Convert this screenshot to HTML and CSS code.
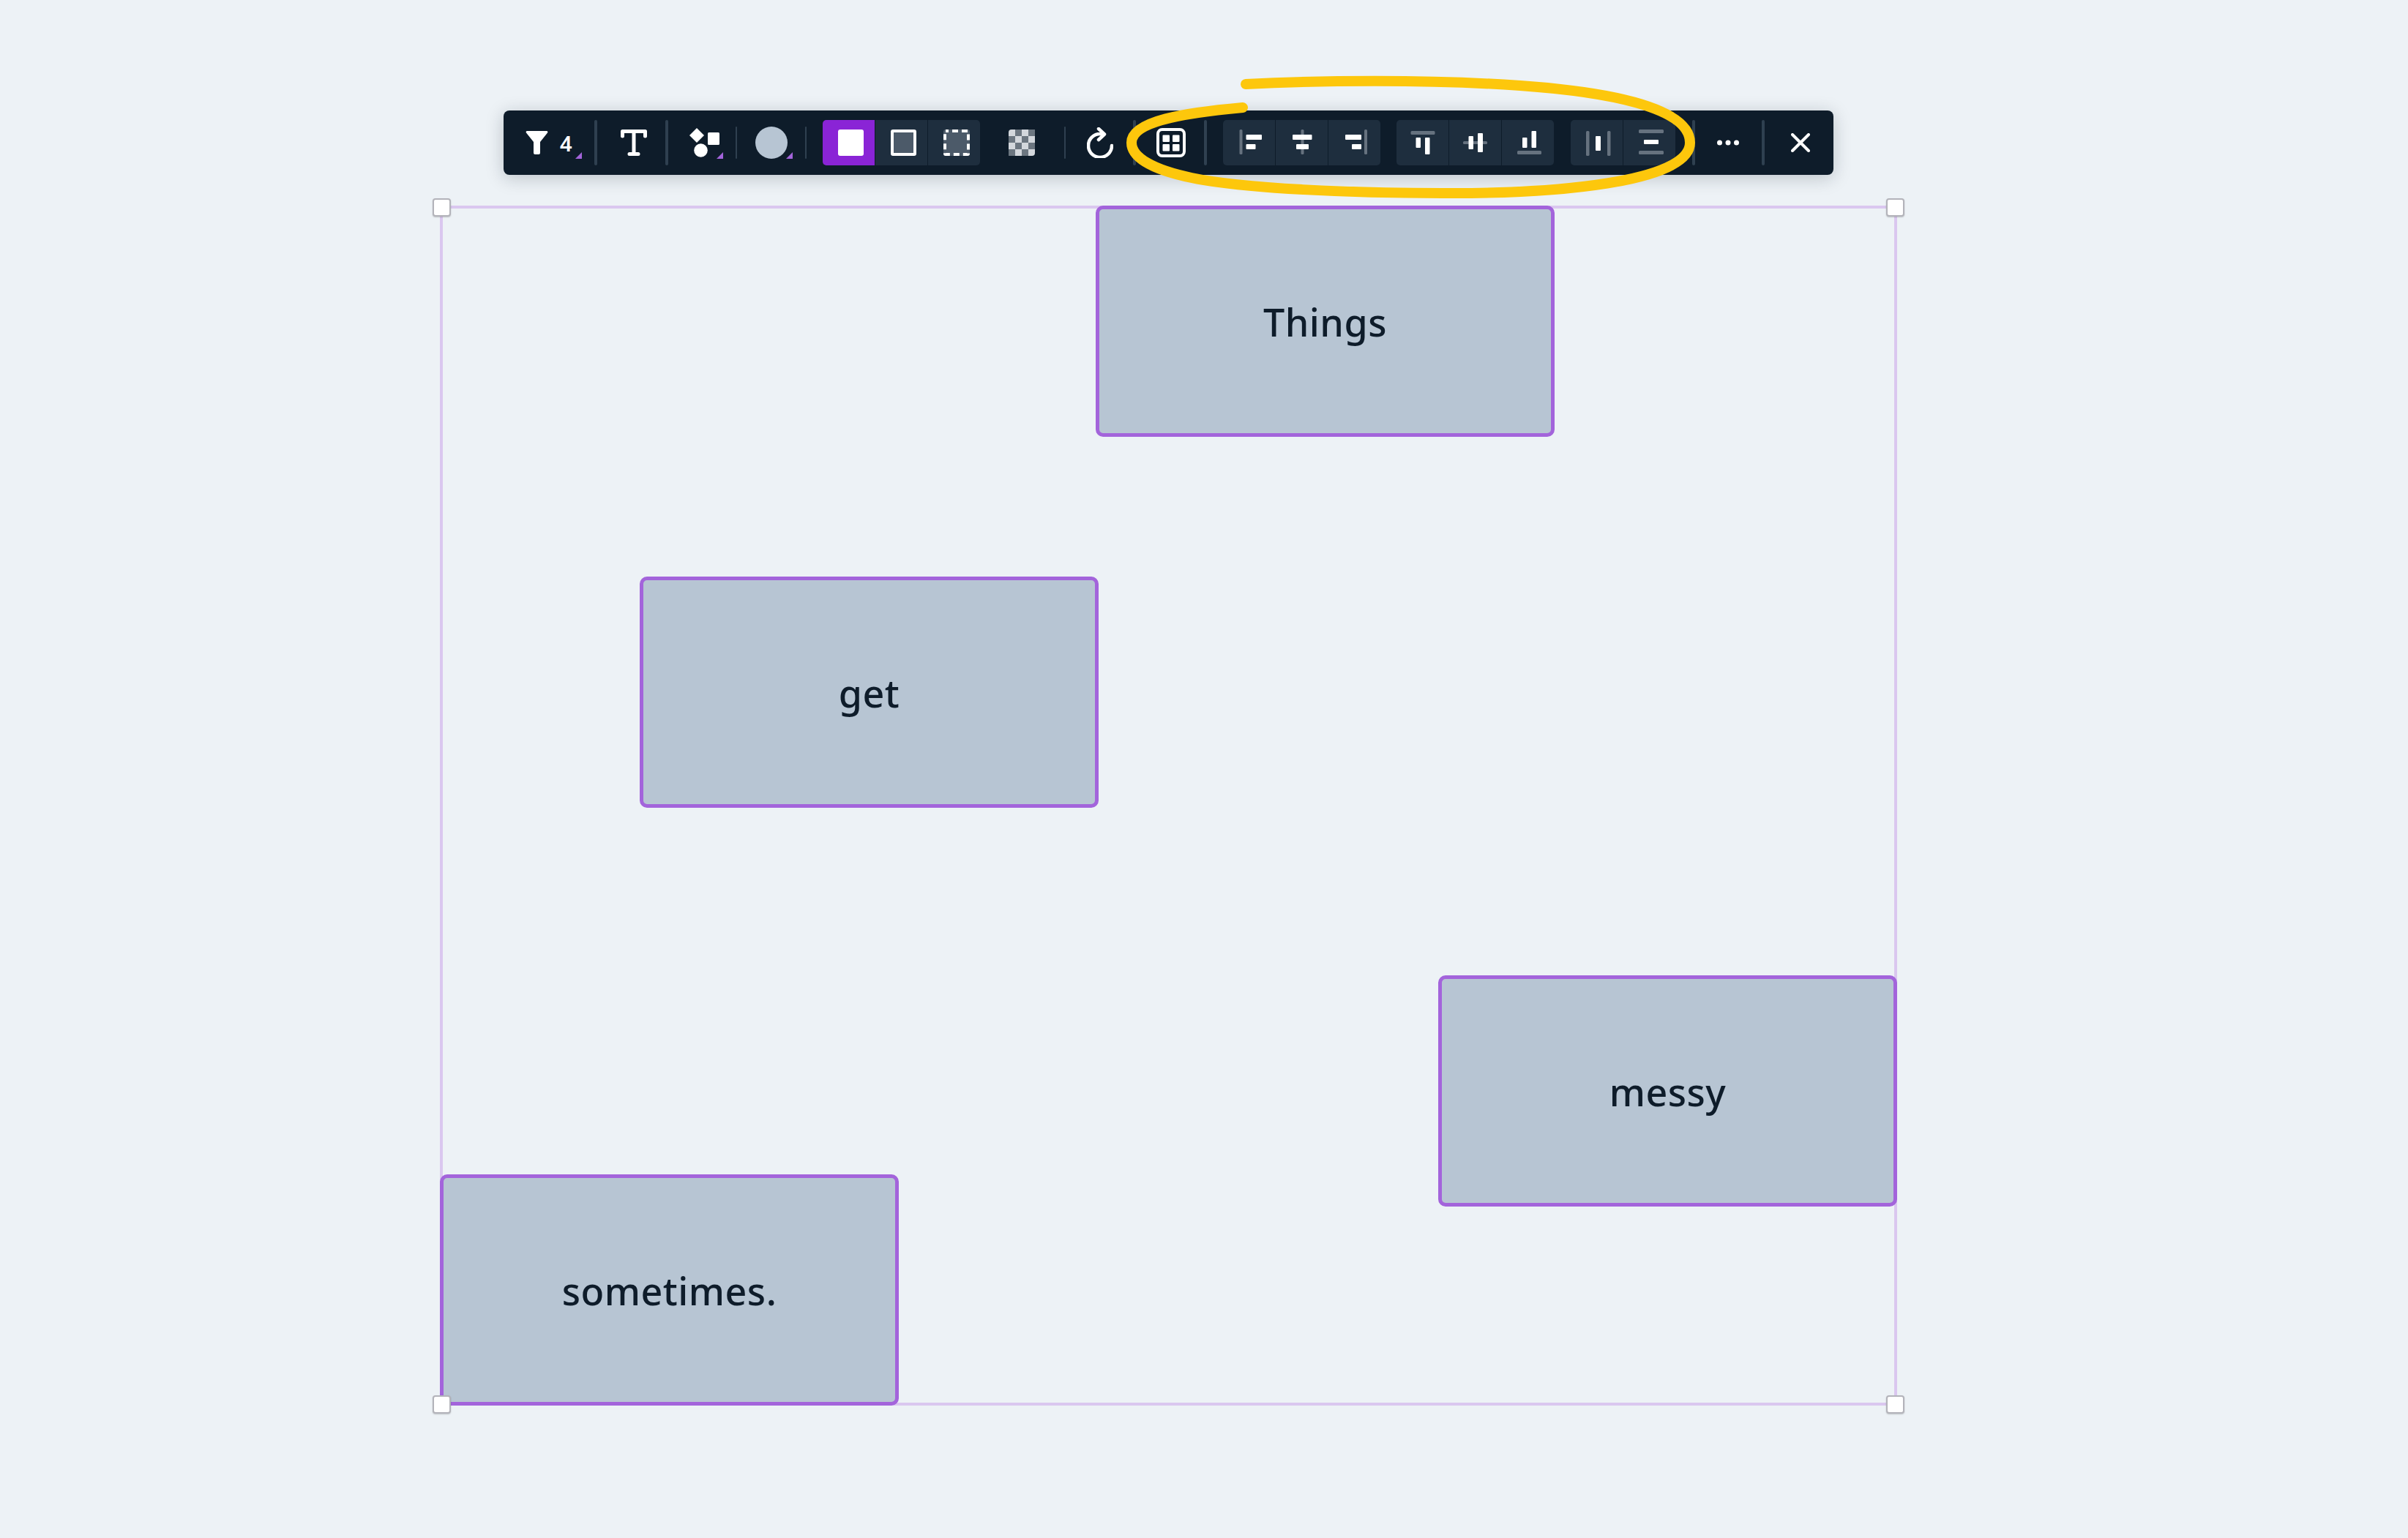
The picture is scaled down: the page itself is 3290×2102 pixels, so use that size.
FILE: index.html
```html
<!DOCTYPE html>
<html lang="en">
<head>
    <meta charset="UTF-8">
    <title>Align tools</title>
    <link rel="stylesheet" href="styles.css">
</head>
<body>
    <div class="canvas">
        <div class="frame"></div>

        <div class="sticky sticky-things">Things</div>
        <div class="sticky sticky-get">get</div>
        <div class="sticky sticky-messy">messy</div>
        <div class="sticky sticky-sometimes">sometimes.</div>

        <div class="handle handle-tl"></div>
        <div class="handle handle-tr"></div>
        <div class="handle handle-bl"></div>
        <div class="handle handle-br"></div>

        <div class="toolbar">
            <div class="tool tool-filter">
                <svg width="31" height="32" viewBox="0 0 31 32"><path d="M2 0H29A1.5 1.5 0 0 1 30 2.500L20 15V30A2 2 0 0 1 18 32H13A2 2 0 0 1 11 30V15L1 2.500A1.500 1.500 0 0 1 2 0Z" fill="#fff"/></svg>
                <span class="count">4</span>
                <i class="corner"></i>
            </div>
            <div class="sep"></div>
            <div class="tool tool-text">
                <svg width="36" height="36" viewBox="0 0 36 36"><path d="M2.500 9V2.500H33.500V9M18 2.500V33.500M12 33.500H24" fill="none" stroke="#fff" stroke-width="5" stroke-linecap="round" stroke-linejoin="round"/></svg>
            </div>
            <div class="sep"></div>
            <div class="tool tool-shapes">
                <svg width="42" height="40" viewBox="0 0 42 40"><path d="M10 0L20 10L10 20L0 10Z" fill="#fff"/><rect x="25" y="6" width="16" height="17" rx="1.500" fill="#fff"/><circle cx="15.500" cy="30.500" r="9.300" fill="#fff"/></svg>
                <i class="corner"></i>
            </div>
            <div class="sep sep-thin"></div>
            <div class="tool tool-color">
                <div class="swatch"></div>
                <i class="corner"></i>
            </div>
            <div class="sep sep-thin"></div>
            <div class="group group-fill">
                <div class="btn btn-active"><div class="fill-solid"></div></div>
                <div class="btn"><div class="fill-outline"></div></div>
                <div class="btn">
                    <svg width="36" height="36" viewBox="0 0 36 36"><rect x="0" y="0" width="36" height="36" rx="3" fill="#4c5a69"/><rect x="2" y="2" width="32" height="32" rx="1" fill="none" stroke="#fff" stroke-width="4" stroke-dasharray="8 5" stroke-dashoffset="4"/></svg>
                </div>
            </div>
            <div class="tool tool-checker">
                <svg width="36" height="36" viewBox="0 0 36 36"><rect width="36" height="36" rx="4" fill="#d3d7dc"/><path d="M9 0H18V9H9ZM27 0H36V9H27ZM0 9H9V18H0ZM18 9H27V18H18ZM9 18H18V27H9ZM27 18H36V27H27ZM0 27H9V36H0ZM18 27H27V36H18Z" fill="#6c7680"/></svg>
            </div>
            <div class="sep sep-thin"></div>
            <div class="tool tool-redo">
                <svg width="36" height="42" viewBox="0 0 36 42"><path d="M34 25A16 16 0 1 1 18 9H23M16 2L24 9.500L16 17" fill="none" stroke="#fff" stroke-width="4.500" stroke-linecap="round" stroke-linejoin="round"/></svg>
            </div>
            <div class="sep"></div>
            <div class="tool tool-grid">
                <svg width="40" height="40" viewBox="0 0 40 40"><rect x="2" y="2" width="36" height="36" rx="6" fill="none" stroke="#fff" stroke-width="4"/><rect x="8.500" y="9.500" width="9.500" height="9.500" rx="1" fill="#fff"/><rect x="22" y="9.500" width="9.500" height="9.500" rx="1" fill="#fff"/><rect x="8.500" y="22" width="9.500" height="9.500" rx="1" fill="#fff"/><rect x="22" y="22" width="9.500" height="9.500" rx="1" fill="#fff"/></svg>
            </div>
            <div class="sep"></div>
            <div class="group group-h">
                <div class="btn">
                    <svg class="ic" viewBox="0 0 36 36"><rect x="5.500" y="0" width="4" height="34" rx="1.500" fill="#66727f"/><rect x="14.500" y="7" width="21.500" height="7" rx="1" fill="#fff"/><rect x="14.500" y="20" width="13" height="7" rx="1" fill="#fff"/></svg>
                </div>
                <div class="btn">
                    <svg class="ic" viewBox="0 0 36 36"><rect x="17.500" y="0" width="4" height="34" rx="1.500" fill="#66727f"/><rect x="6" y="7" width="26.500" height="7" rx="1" fill="#fff"/><rect x="11" y="20" width="17" height="7" rx="1" fill="#fff"/></svg>
                </div>
                <div class="btn">
                    <svg class="ic" viewBox="0 0 36 36"><rect x="31" y="0" width="4" height="34" rx="1.500" fill="#66727f"/><rect x="5" y="7" width="22" height="7" rx="1" fill="#fff"/><rect x="14" y="20" width="13" height="7" rx="1" fill="#fff"/></svg>
                </div>
            </div>
            <div class="group group-v">
                <div class="btn">
                    <svg class="ic" viewBox="0 0 36 36"><rect x="2.500" y="2" width="33" height="5" rx="1.500" fill="#66727f"/><rect x="9.500" y="11" width="6.500" height="14" rx="1" fill="#fff"/><rect x="22" y="11" width="6.500" height="23" rx="1" fill="#fff"/></svg>
                </div>
                <div class="btn">
                    <svg class="ic" viewBox="0 0 36 36"><rect x="2" y="16" width="33" height="4" rx="1.500" fill="#66727f"/><rect x="9.500" y="9" width="6.500" height="18" rx="1" fill="#fff"/><rect x="22" y="5" width="7" height="26" rx="1" fill="#fff"/></svg>
                </div>
                <div class="btn">
                    <svg class="ic" viewBox="0 0 36 36"><rect x="3" y="29" width="33" height="5" rx="1.500" fill="#66727f"/><rect x="10" y="11" width="6.500" height="14" rx="1" fill="#fff"/><rect x="22.500" y="2" width="6.500" height="23" rx="1" fill="#fff"/></svg>
                </div>
            </div>
            <div class="group group-dist">
                <div class="btn">
                    <svg class="ic" viewBox="0 0 36 36"><rect x="4" y="2" width="4.500" height="34" rx="1.500" fill="#66727f"/><rect x="17" y="9" width="7" height="20" rx="1" fill="#fff"/><rect x="33" y="2" width="4.500" height="34" rx="1.500" fill="#66727f"/></svg>
                </div>
                <div class="btn">
                    <svg class="ic" viewBox="0 0 36 36"><rect x="4" y="0" width="34" height="5" rx="1.500" fill="#66727f"/><rect x="11" y="14" width="20" height="6" rx="1" fill="#fff"/><rect x="4" y="29" width="34" height="5" rx="1.500" fill="#66727f"/></svg>
                </div>
            </div>
            <div class="sep sep-dist"></div>
            <div class="tool tool-more">
                <svg width="30" height="8" viewBox="0 0 30 8"><circle cx="3.500" cy="4" r="3.500" fill="#fff"/><circle cx="15" cy="4" r="3.500" fill="#fff"/><circle cx="26.500" cy="4" r="3.500" fill="#fff"/></svg>
            </div>
            <div class="sep"></div>
            <div class="tool tool-close">
                <svg width="26" height="26" viewBox="0 0 26 26"><path d="M2 2L24 24M24 2L2 24" fill="none" stroke="#fff" stroke-width="4" stroke-linecap="round"/></svg>
            </div>
        </div>

        <svg class="scribble" width="3290" height="2102" viewBox="0 0 3290 2102">
            <path d="M1702 115C1800 110 1950 108 2077 117C2190 125 2309 145 2309 195C2309 250 2120 265 1970 264C1850 264 1700 258 1628 243C1575 232 1546 215 1546 195C1546 165 1620 154 1698 147" fill="none" stroke="#fdc70c" stroke-width="14" stroke-linecap="round"/>
        </svg>
    </div>
</body>
</html>
```

FILE: styles.css
```css
html, body {
    margin: 0;
    padding: 0;
}
body {
    background-color: #edf2f6;
    font-family: "Noto Sans", sans-serif;
    overflow: hidden;
}
.canvas {
    position: relative;
    width: 3290px;
    height: 2102px;
}

/* selection */
.frame {
    position: absolute;
    left: 601px;
    top: 281px;
    width: 1991px;
    height: 1640px;
    box-sizing: border-box;
    border: 4px solid #dac7ef;
}
.handle {
    position: absolute;
    width: 25px;
    height: 25px;
    box-sizing: border-box;
    background-color: #fff;
    border: 2px solid #b3b3ba;
    border-radius: 4px;
    box-shadow: 0 1px 2px rgba(0, 0, 0, 0.2);
}
.handle-tl { left: 591px; top: 271px; }
.handle-tr { left: 2577px; top: 271px; }
.handle-bl { left: 591px; top: 1907px; }
.handle-br { left: 2577px; top: 1907px; }

/* stickies */
.sticky {
    position: absolute;
    width: 627px;
    height: 316px;
    box-sizing: border-box;
    display: flex;
    align-items: center;
    justify-content: center;
    background-color: #b7c5d3;
    border: 5px solid #a364db;
    border-radius: 10px;
    color: #0e1c2a;
    font-size: 52px;
    font-weight: 500;
    letter-spacing: 0.5px;
}
.sticky-things { left: 1497px; top: 281px; }
.sticky-get { left: 874px; top: 788px; }
.sticky-messy { left: 1965px; top: 1333px; }
.sticky-sometimes { left: 601px; top: 1605px; }

/* toolbar */
.toolbar {
    position: absolute;
    left: 688px;
    top: 151px;
    width: 1817px;
    height: 88px;
    box-sizing: border-box;
    padding: 13px 0;
    display: flex;
    align-items: center;
    background-color: #0e1c2a;
    border-radius: 8px;
    box-shadow: 0 4px 24px rgba(14, 28, 42, 0.22);
}
.tool {
    position: relative;
    flex: none;
    height: 62px;
    box-sizing: border-box;
    display: flex;
    align-items: center;
    justify-content: center;
}
.sep {
    flex: none;
    width: 4px;
    height: 62px;
    border-radius: 2px;
    background-color: #2f4050;
}
.sep-thin {
    width: 2px;
    height: 44px;
}
.corner {
    position: absolute;
    right: 17px;
    top: 44px;
    width: 9px;
    height: 9px;
    background-color: #a364db;
    clip-path: polygon(100% 0, 100% 100%, 0 100%);
}
.count {
    margin-left: 16px;
    color: #fff;
    font-size: 29px;
    font-weight: 600;
    line-height: 1;
}
.tool-filter {
    width: 107px;
    margin-left: 17px;
    justify-content: flex-start;
    padding-left: 13px;
}
.tool-text { width: 93px; padding-left: 7px; }
.tool-shapes { width: 92px; padding-left: 8px; }
.tool-color { width: 93px; }
.tool-checker { width: 115px; }
.tool-redo { width: 92px; padding-left: 3px; }
.tool-grid { width: 93px; padding-left: 4px; }
.tool-more { width: 91px; }
.tool-close { flex: 1; padding-left: 4px; }
.swatch {
    width: 44px;
    height: 44px;
    border-radius: 50%;
    background-color: #b7c5d3;
}

.group {
    flex: none;
    display: flex;
    gap: 1.5px;
    height: 62px;
}
.group-fill { margin-left: 22px; }
.group-fill .btn { box-sizing: border-box; padding-left: 6px; }
.group-h { margin-left: 22px; }
.group-v { margin-left: 22px; }
.group-dist { margin-left: 23px; }
.sep-dist { margin-left: 23px; }
.btn {
    flex: none;
    width: 70.67px;
    height: 62px;
    display: flex;
    align-items: center;
    justify-content: center;
    background-color: #1e2e3e;
}
.btn:first-child { border-radius: 5px 0 0 5px; }
.btn:last-child { border-radius: 0 5px 5px 0; }
.group .btn-active { background-color: #8a24d6; }
.ic {
    width: 36px;
    height: 36px;
    overflow: visible;
}
.fill-solid {
    width: 35px;
    height: 36px;
    border-radius: 3px;
    background-color: #fff;
}
.fill-outline {
    width: 35px;
    height: 36px;
    box-sizing: border-box;
    border: 4px solid #fff;
    border-radius: 3px;
    background-color: #4c5a69;
}

/* hand drawn highlight, sits over everything */
.scribble {
    position: absolute;
    left: 0;
    top: 0;
    pointer-events: none;
}
```
